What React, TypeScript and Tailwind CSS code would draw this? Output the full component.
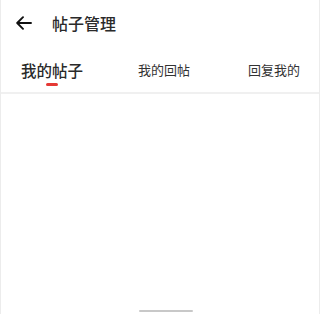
import React from "react";

export default function App() {
  const font = { fontFamily: '"Noto Sans CJK SC", "Noto Sans", sans-serif' };
  return (
    <div className="w-[320px] h-[314px] bg-white border-x border-[#ececec] flex flex-col relative overflow-hidden" style={font}>
      <div className="h-[46px] flex items-center shrink-0">
        <div className="w-[50px] flex items-center justify-center pl-[2px] pr-[6px]">
          <svg width="16" height="14" viewBox="0 0 16 14" fill="none" stroke="#111" strokeWidth="1.9" strokeLinecap="round" strokeLinejoin="round">
            <path d="M15 7H1.5M7 1.2L1.2 7L7 12.8" />
          </svg>
        </div>
        <span className="text-[16px] font-medium text-[#2a2a2a] leading-none ml-[1px]">帖子管理</span>
      </div>
      <div className="h-[48px] flex items-start shrink-0 border-b-2 border-[#f0f0f0]">
        <div className="w-[62px] flex flex-col items-center ml-[20px] mt-[14px]">
          <span className="text-[15.5px] font-medium text-[#2a2a2a] leading-[20px] whitespace-nowrap">我的帖子</span>
          <div className="w-[12px] h-[3px] bg-[#e53935] rounded-full mt-[3px]" />
        </div>
        <span className="text-[13px] text-[#333] leading-[20px] mt-[14px] ml-[55px]">我的回帖</span>
        <span className="text-[13px] text-[#333] leading-[20px] mt-[14px] ml-[58px]">回复我的</span>
      </div>
      <div className="flex-1" />
      <div className="absolute bottom-[2px] left-[138px] w-[54px] h-[2px] bg-[#c8c8c8] rounded-full" />
    </div>
  );
}
